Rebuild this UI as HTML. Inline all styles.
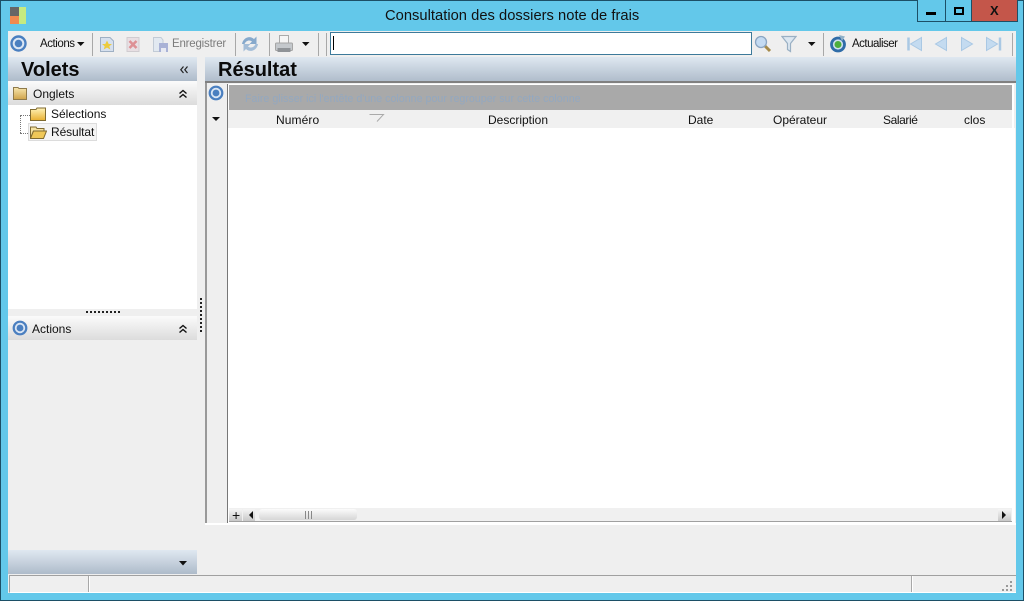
<!DOCTYPE html>
<html><head><meta charset="utf-8"><style>
html,body{margin:0;padding:0;width:1024px;height:601px;overflow:hidden;background:#63c8ea;font-family:"Liberation Sans",sans-serif;color:#111}
div,span,svg{position:absolute;box-sizing:border-box}
.t{font-size:12px;line-height:14px;white-space:nowrap}
.sep{width:1px;height:23px;top:33px;background:#a8a8a8}
.h{background:linear-gradient(#dfe8f1,#aebbca)}
.g{background:linear-gradient(#fbfbfb,#dcdcdc)}
</style></head><body>
<div style="left:0;top:0;width:1024px;height:601px;border:1px solid #1c4f66"></div>
<div style="left:10px;top:7px;width:9px;height:9px;background:#666"></div>
<div style="left:10px;top:16px;width:9px;height:8px;background:#f08a50"></div>
<div style="left:19px;top:7px;width:7px;height:17px;background:#c6ea80"></div>
<div style="left:385px;top:8px;font-size:14.7px;line-height:17px;letter-spacing:.03px;white-space:nowrap;color:#111">Consultation des dossiers note de frais</div>
<div style="left:917px;top:0;width:55px;height:22px;border:1px solid #1c4f66;border-top:0;background:#63c8ea"></div>
<div style="left:945px;top:0;width:1px;height:22px;background:#1c4f66"></div>
<div style="left:971px;top:0;width:47px;height:22px;background:#c4564a;border:1px solid #1c4f66;border-top:0"></div>
<div style="left:926px;top:12px;width:10px;height:3px;background:#000"></div>
<div style="left:954px;top:7px;width:10px;height:8px;border:2px solid #000"></div>
<div style="left:990px;top:3px;font:bold 13px/16px 'Liberation Sans',sans-serif;color:#111">X</div>

<div style="left:8px;top:31px;width:1008px;height:562px;background:#efefef"></div>

<!-- toolbar -->
<svg style="left:10px;top:35px" width="18" height="18" viewBox="0 0 18 18"><circle cx="8.500" cy="8.500" r="7" fill="#dbe6f4" stroke="#4a7fc0" stroke-width="2.400"/><circle cx="8.500" cy="8.500" r="3.800" fill="#4a7fc0"/></svg>
<div class="t" style="left:40px;top:37px;font-size:11.5px;letter-spacing:-.45px">Actions</div>
<svg style="left:77px;top:42px" width="8" height="5"><path d="M0 0H7.500L3.700 4Z" fill="#111"/></svg>
<div class="sep" style="left:92px"></div>
<svg style="left:99px;top:36px" width="16" height="17" viewBox="0 0 16 17"><path d="M1.500 1.500H11L14.500 5V15.500H1.500Z" fill="#d6e0ee" stroke="#9fb0c4"/><path d="M8 4.500L9.700 8H13L10.300 10.200L11.300 13.500L8 11.600L4.700 13.500L5.700 10.200L3 8H6.300Z" fill="#eccb3c"/></svg>
<svg style="left:125px;top:36px" width="16" height="17" viewBox="0 0 16 17"><rect x="2" y="1.500" width="12" height="14" fill="#e8dfe3" stroke="#d0ccd0"/><path d="M4.500 5L11.500 12M11.500 5L4.500 12" stroke="#dd9095" stroke-width="2.600"/></svg>
<svg style="left:152px;top:36px" width="17" height="17" viewBox="0 0 17 17"><path d="M1.500 1.500H9L11 4V15.500H1.500Z" fill="#e2e9f1" stroke="#c2cbd6"/><rect x="7" y="7" width="9" height="9" fill="#a9b2d6"/><rect x="9" y="12" width="5" height="4" fill="#e8eaf2"/></svg>
<div class="t" style="left:172px;top:37px;font-size:11.5px;letter-spacing:-.2px;color:#7c7c7c">Enregistrer</div>
<div class="sep" style="left:235px"></div>
<svg style="left:241px;top:35px" width="18" height="18" viewBox="0 0 18 18"><path d="M1 9C2 2.500 9 0 13 4L15.500 1.500V9H8.500L11 6.500C8.500 4.500 5 5.500 3.500 9Z" fill="#86a9cc"/><path d="M17 9C16 15.500 9 18 5 14L2.500 16.500V9H9.500L7 11.500C9.500 13.500 13 12.500 14.500 9Z" fill="#a4bdd7"/></svg>
<div class="sep" style="left:269px"></div>
<svg style="left:275px;top:35px" width="18" height="18" viewBox="0 0 18 18"><rect x="4.500" y="0.500" width="9" height="8" fill="#f5f5f5" stroke="#aaa"/><rect x="0.500" y="8" width="17" height="7.500" rx="1" fill="#c4c8cc" stroke="#a5a5a5"/><rect x="2.500" y="13" width="13" height="4" fill="#8f9397"/></svg>
<svg style="left:302px;top:42px" width="8" height="5"><path d="M0 0H7.500L3.700 4Z" fill="#111"/></svg>
<div class="sep" style="left:318px"></div>
<div class="sep" style="left:326px"></div>
<div style="left:330px;top:32px;width:422px;height:23px;background:#fff;border:1px solid #3d7a9a"></div>
<div style="left:333px;top:36px;width:1px;height:14px;background:#000"></div>
<svg style="left:754px;top:35px" width="18" height="18" viewBox="0 0 18 18"><path d="M11 11L16 16" stroke="#a58a4a" stroke-width="3"/><circle cx="7" cy="7" r="5.500" fill="#c4dbf2" stroke="#8aa5c2" stroke-width="1.300"/></svg>
<svg style="left:781px;top:35px" width="16" height="18" viewBox="0 0 16 18"><path d="M1 1.500H15L9.500 8.500V16.500L6.500 14.500V8.500Z" fill="#dce7f1" stroke="#9ab0c4" stroke-width="1.200"/></svg>
<svg style="left:808px;top:42px" width="8" height="5"><path d="M0 0H7.500L3.700 4Z" fill="#111"/></svg>
<div class="sep" style="left:823px"></div>
<svg style="left:829px;top:35px" width="18" height="18" viewBox="0 0 18 18"><circle cx="9" cy="9.500" r="6.500" fill="#cfe0ee" stroke="#2f6ca8" stroke-width="2.800"/><circle cx="9" cy="9.500" r="3.500" fill="#4cae3c"/><path d="M10 0L16 1.500L13 6Z" fill="#8fb0c8"/></svg>
<div class="t" style="left:852px;top:37px;font-size:11.5px;letter-spacing:-.5px">Actualiser</div>
<svg style="left:906px;top:36px" width="110" height="16" viewBox="0 0 110 16" fill="#c4dbf0" stroke="#a9c8e4"><path d="M2.500 1.500V14.500" stroke-width="2.500"/><path d="M15.500 1.500V14.500L4.500 8Z"/><path d="M40.500 1.500V14.500L29.500 8Z"/><path d="M55.500 1.500V14.500L66.500 8Z"/><path d="M80.500 1.500V14.500L91.500 8Z"/><path d="M94 1.500V14.500" stroke-width="2.500"/></svg>
<div class="sep" style="left:1012px"></div>

<!-- left panel -->
<div class="h" style="left:8px;top:57px;width:189px;height:24px"></div>
<div style="left:21px;top:59px;font:bold 20px/22px 'Liberation Sans',sans-serif;color:#0a0a0a">Volets</div>
<svg style="left:180px;top:66px" width="8" height="8" fill="none" stroke="#222" stroke-width="1.200"><path d="M3.500 .5L.8 3.700L3.500 7M7.500 .5L4.800 3.700L7.500 7"/></svg>
<div class="g" style="left:8px;top:81px;width:189px;height:24px"></div>
<svg style="left:13px;top:86px" width="14" height="14"><path d="M.5 2.500V1.500H5L6 2.500H13.500V13.500H.5Z" fill="url(#b)" stroke="#8f7a4a"/><linearGradient id="b" x1="0" y1="0" x2="0" y2="1"><stop offset="0" stop-color="#f7e6ae"/><stop offset="1" stop-color="#cfa34a"/></linearGradient></svg>
<div class="t" style="left:33px;top:87px">Onglets</div>
<svg style="left:178px;top:89px" width="10" height="10" fill="none" stroke="#111" stroke-width="1.400"><path d="M1.500 4.500L5 1.500L8.500 4.500M1.500 8.500L5 5.500L8.500 8.500"/></svg>
<div style="left:8px;top:105px;width:189px;height:204px;background:#fff"></div>
<div style="left:20px;top:115px;width:1px;height:18px;border-left:1px dotted #777"></div>
<div style="left:20px;top:115px;width:10px;height:1px;border-top:1px dotted #777"></div>
<div style="left:20px;top:133px;width:10px;height:1px;border-top:1px dotted #777"></div>
<div style="left:28px;top:123px;width:69px;height:18px;background:#f4f4f4;border:1px solid #dcdcdc"></div>
<svg style="left:30px;top:107px" width="16" height="14"><path d="M.5 2.500H6L7 1H15.500V13.500H.5Z" fill="url(#a)" stroke="#7f6a30"/><linearGradient id="a" x1="0" y1="0" x2="0" y2="1"><stop offset="0" stop-color="#fff3b8"/><stop offset="1" stop-color="#e8b030"/></linearGradient></svg>
<div class="t" style="left:51px;top:107px">Sélections</div>
<svg style="left:30px;top:125px" width="17" height="14"><path d="M.5 2H6L7 3.500H14V6H3.500L.5 13Z" fill="#f5e2a0" stroke="#7f6a30"/><path d="M3.500 6H16.500L13.500 13.500H.5Z" fill="#f0c858" stroke="#7f6a30"/></svg>
<div class="t" style="left:51px;top:125px;letter-spacing:-.1px">Résultat</div>
<div style="left:86px;top:311px;width:34px;height:2px;background:repeating-linear-gradient(90deg,#222 0 2px,transparent 2px 4px)"></div>
<div class="g" style="left:8px;top:316px;width:189px;height:24px"></div>
<svg style="left:12px;top:320px" width="16" height="16" viewBox="0 0 16 16"><circle cx="8" cy="8" r="6.300" fill="#dbe6f4" stroke="#4a7fc0" stroke-width="2.200"/><circle cx="8" cy="8" r="3.400" fill="#4a7fc0"/></svg>
<div class="t" style="left:32px;top:322px">Actions</div>
<svg style="left:178px;top:324px" width="10" height="10" fill="none" stroke="#111" stroke-width="1.400"><path d="M1.500 4.500L5 1.500L8.500 4.500M1.500 8.500L5 5.500L8.500 8.500"/></svg>
<div class="h" style="left:8px;top:550px;width:189px;height:24px"></div>
<svg style="left:179px;top:561px" width="9" height="5"><path d="M0 0H8L4 4.500Z" fill="#111"/></svg>
<div style="left:200px;top:298px;width:2px;height:36px;background:repeating-linear-gradient(#222 0 2px,transparent 2px 4px)"></div>

<!-- right panel -->
<div class="h" style="left:205px;top:57px;width:811px;height:25px"></div>
<div style="left:205px;top:81px;width:811px;height:2px;background:#808080"></div>
<div style="left:218px;top:59px;font:bold 20px/22px 'Liberation Sans',sans-serif;color:#0a0a0a">Résultat</div>
<div style="left:205px;top:83px;width:2px;height:441px;background:#999"></div>
<div style="left:205px;top:523px;width:811px;height:2px;background:#fff"></div>
<div style="left:207px;top:84px;width:20px;height:439px;background:#efefef"></div>
<div style="left:227px;top:84px;width:1px;height:439px;background:#777"></div>
<div style="left:228px;top:84px;width:786px;height:44px;background:#fff"></div>
<div style="left:228px;top:128px;width:787px;height:395px;background:#fff"></div>
<svg style="left:208px;top:85px" width="16" height="16" viewBox="0 0 16 16"><circle cx="8" cy="8" r="6.300" fill="#dbe6f4" stroke="#4a7fc0" stroke-width="2.200"/><circle cx="8" cy="8" r="3.400" fill="#4a7fc0"/></svg>
<div style="left:229px;top:85px;width:783px;height:25px;background:#a9a9a9"></div>
<div class="t" style="left:245px;top:92px;color:#93a8c0;font-size:10.7px">Faire glisser ici l'entête d'une colonne pour regrouper sur cette colonne</div>
<svg style="left:212px;top:117px" width="9" height="5"><path d="M0 0H8L4 4Z" fill="#111"/></svg>
<div style="left:228px;top:110px;width:784px;height:18px;background:#f0f0f0"></div>
<div class="t" style="left:276px;top:113px;letter-spacing:.1px">Numéro</div>
<svg style="left:369px;top:114px" width="16" height="9" fill="none" stroke="#aaa"><path d="M.5 .5H14.500L8 7.500"/></svg>
<div class="t" style="left:488px;top:113px">Description</div>
<div class="t" style="left:688px;top:113px">Date</div>
<div class="t" style="left:773px;top:113px">Opérateur</div>
<div class="t" style="left:883px;top:113px;letter-spacing:-.4px">Salarié</div>
<div class="t" style="left:964px;top:113px">clos</div>

<!-- hscroll -->
<div style="left:229px;top:508px;width:783px;height:14px;background:#f0f0f0"></div>
<div style="left:229px;top:521px;width:783px;height:1px;background:#a0a0a0"></div>
<div style="left:229px;top:509px;width:13px;height:12px;background:linear-gradient(#f5f5f5,#c8c8c8)"></div>
<div style="left:232px;top:507px;font:14px/16px 'Liberation Sans',sans-serif;color:#111">+</div>
<div style="left:243px;top:509px;width:12px;height:12px;background:linear-gradient(#f5f5f5,#c8c8c8)"></div>
<svg style="left:249px;top:511px" width="5" height="8"><path d="M4 0V8L0 4Z" fill="#111"/></svg>
<div style="left:259px;top:509px;width:98px;height:11px;border-radius:3px;background:linear-gradient(#fbfbfb,#d6d6d6)"></div>
<div style="left:305px;top:511px;width:7px;height:8px;border-left:1px solid #888;border-right:1px solid #888"></div>
<div style="left:308px;top:511px;width:1px;height:8px;background:#888"></div>
<div style="left:998px;top:509px;width:13px;height:12px;background:linear-gradient(#f5f5f5,#c8c8c8)"></div>
<svg style="left:1002px;top:511px" width="5" height="8"><path d="M0 0V8L4 4Z" fill="#111"/></svg>

<!-- status bar -->
<div style="left:9px;top:575px;width:1007px;height:18px;background:#efefef;border-top:1px solid #a0a0a0;border-left:1px solid #a0a0a0;border-bottom:1px solid #fff"></div>
<div style="left:88px;top:576px;width:1px;height:16px;background:#a8a8a8"></div>
<div style="left:89px;top:576px;width:1px;height:16px;background:#fff"></div>
<div style="left:911px;top:576px;width:1px;height:16px;background:#a8a8a8"></div>
<div style="left:912px;top:576px;width:1px;height:16px;background:#fff"></div>
<svg style="left:1001px;top:580px" width="12" height="12" fill="#999"><rect x="9" y="1" width="2" height="2"/><rect x="5" y="5" width="2" height="2"/><rect x="9" y="5" width="2" height="2"/><rect x="1" y="9" width="2" height="2"/><rect x="5" y="9" width="2" height="2"/><rect x="9" y="9" width="2" height="2"/></svg>
</body></html>
